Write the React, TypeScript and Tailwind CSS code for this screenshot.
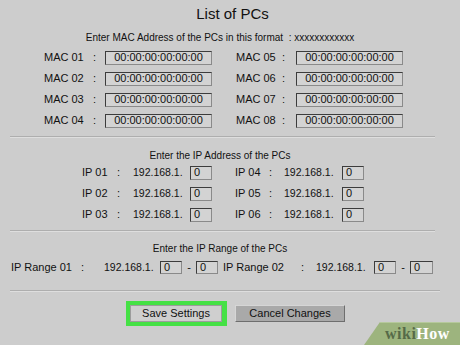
const macLeft = ["01", "02", "03", "04"];
const macRight = ["05", "06", "07", "08"];
const ipLeft = ["01", "02", "03"];
const ipRight = ["04", "05", "06"];

function Box({ className, children }: { className: string; children?: React.ReactNode }) {
  return (
    <div
      className={`flex items-center border border-t-[#3c3c3c] border-l-[#3c3c3c] border-r-[#8a8a8a] border-b-[#8a8a8a] bg-[#d3d3d3] ${className}`}
    >
      {children}
    </div>
  );
}

function Divider({ className }: { className: string }) {
  return (
    <div
      className={`h-[2px] border-t border-t-[#aeaeae] border-b border-b-[#dedede] ${className}`}
    />
  );
}

function App() {
  return (
    <div className="relative w-[460px] h-[345px] overflow-hidden bg-[#cdcdcd] text-[#111] font-['Liberation_Sans',Arial,sans-serif]">
      <div className="flex flex-col">
        <div className="h-[28px] flex items-center justify-center pl-[5px] text-[15px]">
          List of PCs
        </div>
        <div className="h-[19px] w-[440px] flex items-center justify-center text-[10px]">
          Enter MAC Address of the PCs in this format&nbsp;&nbsp;: xxxxxxxxxxxx
        </div>

        {macLeft.map((n, i) => (
          <div key={n} className="h-[21px] flex items-center pl-[44px] text-[11px]">
            <span className="w-[49px]">MAC {n}</span>
            <span className="w-[12px]">:</span>
            <Box className="w-[107px] h-[14px] justify-center">00:00:00:00:00:00</Box>
            <span className="w-[46px] ml-[24px]">MAC {macRight[i]}</span>
            <span className="w-[14px]">:</span>
            <Box className="w-[107px] h-[14px] justify-center">00:00:00:00:00:00</Box>
          </div>
        ))}

        <Divider className="mt-[5px] ml-[10px] w-[425px]" />

        <div className="mt-[10px] h-[14px] w-[440px] flex items-center justify-center text-[10px]">
          Enter the IP Address of the PCs
        </div>

        {ipLeft.map((n, i) => (
          <div key={n} className="h-[21px] flex items-center pl-[82px] text-[11px]">
            <span className="w-[35px]">IP {n}</span>
            <span className="w-[16px]">:</span>
            <span className="w-[57px] text-[10.5px]">192.168.1.</span>
            <Box className="w-[22px] h-[14px] pl-[3px]">0</Box>
            <span className="w-[34px] ml-[23px]">IP {ipRight[i]}</span>
            <span className="w-[15px]">:</span>
            <span className="w-[58px] text-[10.5px]">192.168.1.</span>
            <Box className="w-[22px] h-[14px] pl-[3px]">0</Box>
          </div>
        ))}

        <Divider className="mt-[5px] ml-[10px] w-[425px]" />

        <div className="mt-[9px] h-[14px] w-[440px] flex items-center justify-center text-[10px]">
          Enter the IP Range of the PCs
        </div>

        <div className="mt-[2px] h-[21px] flex items-center pl-[11px] text-[11px]">
          <span className="w-[70px]">IP Range 01</span>
          <span className="w-[23px]">:</span>
          <span className="w-[56px] text-[10.5px]">192.168.1.</span>
          <Box className="w-[22px] h-[13px] pl-[3px]">0</Box>
          <span className="w-[14px] text-center">-</span>
          <Box className="w-[22px] h-[13px] pl-[3px]">0</Box>
          <span className="w-[78px] ml-[5px]">IP Range 02</span>
          <span className="w-[15px]">:</span>
          <span className="w-[58px] text-[10.5px]">192.168.1.</span>
          <Box className="w-[22px] h-[13px] pl-[3px]">0</Box>
          <span className="w-[14px] text-center">-</span>
          <Box className="w-[23px] h-[13px] pl-[3px]">0</Box>
        </div>

        <Divider className="mt-[12px] ml-[10px] w-[430px]" />

        <div className="mt-[9px] flex items-center pl-[126px] text-[11px]">
          <div className="w-[101px] h-[25px] border-[4px] border-[#45e145] border-r-[5px] flex">
            <button className="flex-1 flex items-center justify-center border border-[#9c9c9c] bg-[#cfcfcf]">
              Save Settings
            </button>
          </div>
          <button className="ml-[8px] w-[110px] h-[17px] flex items-center justify-center border border-t-[#d6d6d6] border-l-[#d6d6d6] border-r-[#6e6e6e] border-b-[#6e6e6e] bg-[#a9a9a9]">
            Cancel Changes
          </button>
        </div>
      </div>

      <div className="absolute right-0 bottom-0 w-[96px] h-[23px]">
        <svg width="96" height="23" viewBox="0 0 96 23" className="absolute inset-0">
          <polygon points="16,0 96,0 96,23 0,23" fill="#9db47e" />
          <line x1="16" y1="0.5" x2="96" y2="0.5" stroke="#b6c99c" strokeWidth="1" />
        </svg>
        <div className="absolute left-[21px] top-[2px] text-[16px] font-bold tracking-[0.5px] leading-[20px] font-['Liberation_Serif',serif]">
          <span className="text-[#566a48]">wiki</span>
          <span className="text-white">How</span>
        </div>
      </div>
    </div>
  );
}

export default App;
